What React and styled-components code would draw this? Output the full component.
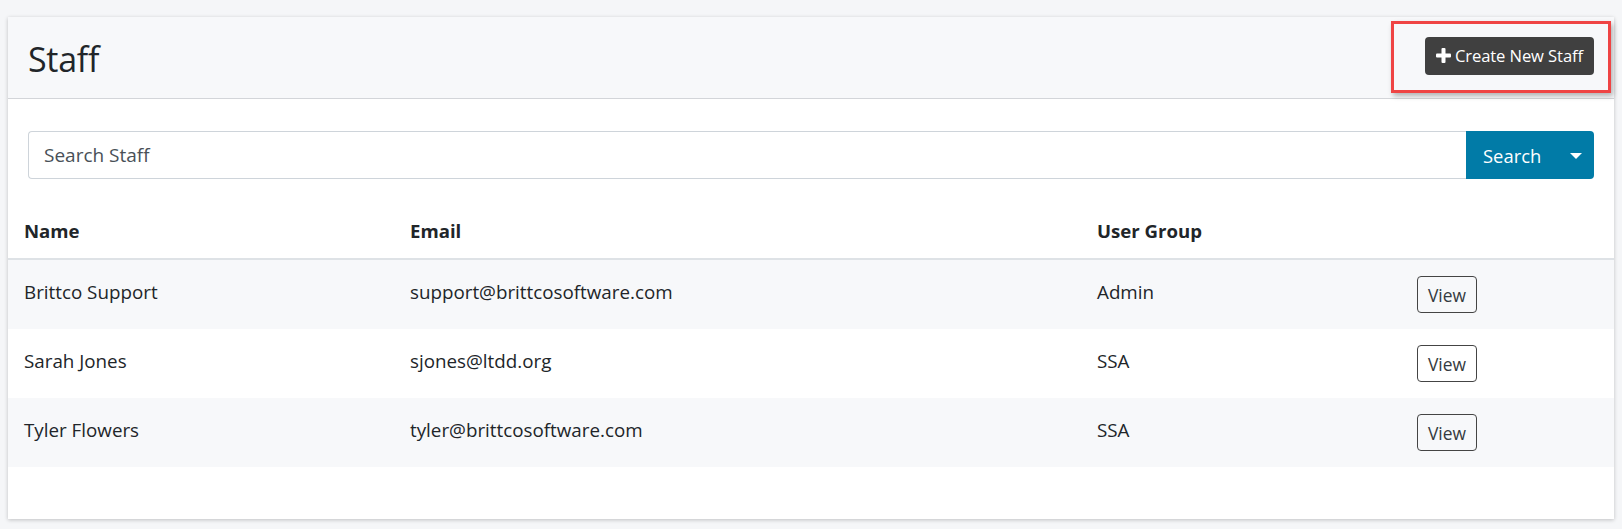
import React from "react";
import styled, { createGlobalStyle } from "styled-components";

const GlobalStyle = createGlobalStyle`
  html, body {
    margin: 0;
    padding: 0;
    background: #f5f6f8;
  }
  body {
    font-family: "Open Sans", "Noto Sans", sans-serif;
    color: #212529;
    -webkit-font-smoothing: antialiased;
  }
  * { box-sizing: border-box; }
`;

const Page = styled.div`
  padding: 17px 8px 10px 8px;
`;

const Card = styled.section`
  background: #ffffff;
  box-shadow: 0 1px 4px rgba(0, 0, 0, 0.22);
  height: 502px;
  display: flex;
  flex-direction: column;
`;

const CardHeader = styled.header`
  height: 82px;
  background: #f7f8fa;
  border-bottom: 1px solid #d3d5d9;
  display: flex;
  align-items: center;
  justify-content: space-between;
  padding: 4px 20px 0 20px;
`;

const Title = styled.h1`
  margin: 0;
  font-size: 34px;
  font-weight: 400;
  line-height: 1.2;
  color: #212529;
  letter-spacing: -0.3px;
`;

const Highlight = styled.div`
  position: relative;
  display: flex;
  margin-bottom: 8px;
`;

const AnnotationBox = styled.span`
  position: absolute;
  top: -16px;
  left: -34px;
  right: -17px;
  bottom: -18px;
  border: 3px solid #ef4444;
  box-shadow: 2px 3px 5px rgba(0, 0, 0, 0.28);
  pointer-events: none;
`;

const DarkButton = styled.button`
  display: inline-flex;
  align-items: center;
  gap: 4px;
  height: 38px;
  padding: 0 11px;
  background: #404040;
  color: #ffffff;
  border: none;
  border-radius: 4px;
  font-family: inherit;
  font-size: 16.6px;
  letter-spacing: -0.1px;
  cursor: pointer;
`;

const CardBody = styled.div`
  padding: 32px 0 0 0;
  flex: 1;
`;

const SearchGroup = styled.form`
  display: flex;
  height: 48px;
  margin: 0 20px 24px 20px;
`;

const SearchInput = styled.input`
  flex: 1;
  height: 100%;
  border: 1px solid #ced4da;
  border-right: none;
  border-radius: 4px 0 0 4px;
  padding: 0 15px;
  font-family: inherit;
  font-size: 19px;
  color: #495057;
  outline: none;
  &::placeholder {
    color: #495057;
    opacity: 1;
  }
`;

const SearchButton = styled.button`
  width: 128px;
  height: 100%;
  display: flex;
  align-items: center;
  justify-content: space-between;
  padding: 0 12px 0 17px;
  background: #017ba7;
  color: #ffffff;
  border: none;
  border-radius: 0 4px 4px 0;
  font-family: inherit;
  font-size: 18.4px;
  cursor: pointer;
`;

const Caret = styled.span`
  width: 0;
  height: 0;
  border-left: 6.5px solid transparent;
  border-right: 6.5px solid transparent;
  border-top: 6.5px solid #ffffff;
  margin-top: 1px;
`;

const Table = styled.div`
  display: grid;
  grid-template-columns: 386px 687px 320px 1fr;
`;

const HeadRow = styled.div`
  display: contents;
`;

const HeadCell = styled.div`
  padding: 14px 16px 13px 16px;
  font-weight: 700;
  font-size: 18.6px;
  line-height: 28px;
  border-bottom: 2px solid #dee2e6;
`;

const Row = styled.div`
  display: contents;
`;

const Cell = styled.div`
  height: 69px;
  padding: 18px 16px 0 16px;
  font-size: 18.8px;
  line-height: 28px;
  background: ${(p) => (p.$striped ? "#f7f8fa" : "#ffffff")};
  white-space: nowrap;
`;

const ActionCell = styled(Cell)`
  padding-top: 16px;
`;

const OutlineButton = styled.button`
  height: 37px;
  width: 60px;
  padding: 0;
  background: transparent;
  border: 1px solid #444444;
  border-radius: 4px;
  color: #343a40;
  font-family: inherit;
  font-size: 17.4px;
  cursor: pointer;
`;

const PlusIcon = () => (
  <svg width="15" height="15" viewBox="0 0 15 15" aria-hidden="true">
    <rect x="5.5" y="0" width="4" height="15" rx="1" fill="#ffffff" />
    <rect x="0" y="5.5" width="15" height="4" rx="1" fill="#ffffff" />
  </svg>
);

const staff = [
  { name: "Brittco Support", email: "support@brittcosoftware.com", group: "Admin" },
  { name: "Sarah Jones", email: "sjones@ltdd.org", group: "SSA" },
  { name: "Tyler Flowers", email: "tyler@brittcosoftware.com", group: "SSA" },
];

export default function App() {
  return (
    <>
      <GlobalStyle />
      <Page>
        <Card>
          <CardHeader>
            <Title>Staff</Title>
            <Highlight>
              <DarkButton type="button">
                <PlusIcon />
                Create New Staff
              </DarkButton>
              <AnnotationBox />
            </Highlight>
          </CardHeader>
          <CardBody>
            <SearchGroup onSubmit={(e) => e.preventDefault()}>
              <SearchInput placeholder="Search Staff" />
              <SearchButton type="button">
                Search
                <Caret />
              </SearchButton>
            </SearchGroup>
            <Table>
              <HeadRow>
                <HeadCell>Name</HeadCell>
                <HeadCell>Email</HeadCell>
                <HeadCell>User Group</HeadCell>
                <HeadCell />
              </HeadRow>
              {staff.map((s, i) => {
                const striped = i % 2 === 0;
                return (
                  <Row key={s.email}>
                    <Cell $striped={striped}>{s.name}</Cell>
                    <Cell $striped={striped}>{s.email}</Cell>
                    <Cell $striped={striped}>{s.group}</Cell>
                    <ActionCell $striped={striped}>
                      <OutlineButton type="button">View</OutlineButton>
                    </ActionCell>
                  </Row>
                );
              })}
            </Table>
          </CardBody>
        </Card>
      </Page>
    </>
  );
}
